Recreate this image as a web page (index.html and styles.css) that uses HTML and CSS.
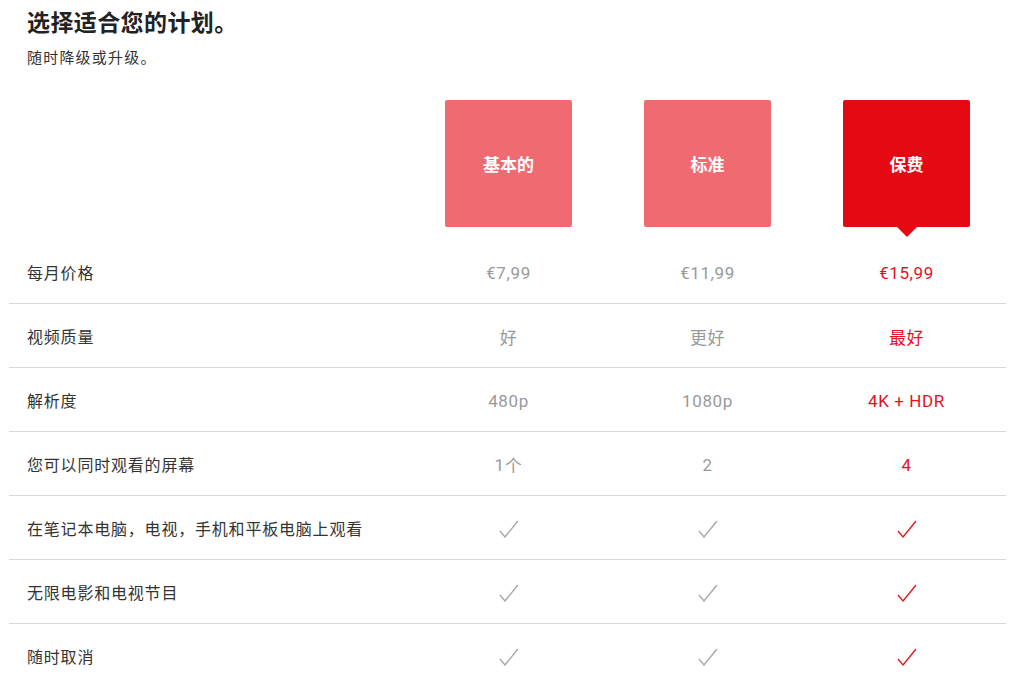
FILE: index.html
```html
<!DOCTYPE html>
<html lang="zh-CN">
<head>
<meta charset="utf-8">
<title>选择适合您的计划</title>
<link rel="stylesheet" href="styles.css">
</head>
<body>
<div class="page">
  <h1 class="title">选择适合您的计划。</h1>
  <p class="subtitle">随时降级或升级。</p>

  <div class="plans">
    <div class="spacer"></div>
    <div class="plan-cell"><div class="plan">基本的</div></div>
    <div class="plan-cell"><div class="plan">标准</div></div>
    <div class="plan-cell"><div class="plan selected">保费</div></div>
  </div>

  <div class="table">
    <div class="row">
      <div class="label">每月价格</div>
      <div class="val">€7,99</div>
      <div class="val">€11,99</div>
      <div class="val on">€15,99</div>
    </div>
    <div class="row">
      <div class="label">视频质量</div>
      <div class="val cjk">好</div>
      <div class="val cjk">更好</div>
      <div class="val cjk on">最好</div>
    </div>
    <div class="row">
      <div class="label">解析度</div>
      <div class="val">480p</div>
      <div class="val">1080p</div>
      <div class="val on">4K + HDR</div>
    </div>
    <div class="row">
      <div class="label">您可以同时观看的屏幕</div>
      <div class="val">1<span class="cjk">个</span></div>
      <div class="val">2</div>
      <div class="val on">4</div>
    </div>
    <div class="row">
      <div class="label">在笔记本电脑，电视，手机和平板电脑上观看</div>
      <div class="val"><svg class="check" viewBox="0 0 20 18"><polyline points="1,11 6,17 19,1"/></svg></div>
      <div class="val"><svg class="check" viewBox="0 0 20 18"><polyline points="1,11 6,17 19,1"/></svg></div>
      <div class="val on"><svg class="check" viewBox="0 0 20 18"><polyline points="1,11 6,17 19,1"/></svg></div>
    </div>
    <div class="row">
      <div class="label">无限电影和电视节目</div>
      <div class="val"><svg class="check" viewBox="0 0 20 18"><polyline points="1,11 6,17 19,1"/></svg></div>
      <div class="val"><svg class="check" viewBox="0 0 20 18"><polyline points="1,11 6,17 19,1"/></svg></div>
      <div class="val on"><svg class="check" viewBox="0 0 20 18"><polyline points="1,11 6,17 19,1"/></svg></div>
    </div>
    <div class="row last">
      <div class="label">随时取消</div>
      <div class="val"><svg class="check" viewBox="0 0 20 18"><polyline points="1,11 6,17 19,1"/></svg></div>
      <div class="val"><svg class="check" viewBox="0 0 20 18"><polyline points="1,11 6,17 19,1"/></svg></div>
      <div class="val on"><svg class="check" viewBox="0 0 20 18"><polyline points="1,11 6,17 19,1"/></svg></div>
    </div>
  </div>
</div>
</body>
</html>
```

FILE: styles.css
```css
* { box-sizing: border-box; }

html, body {
  margin: 0;
  padding: 0;
  background: #ffffff;
}

body {
  font-family: "Noto Sans CJK SC", "Noto Sans", sans-serif;
  color: #333333;
}

.page {
  width: 997px;
  margin-left: 9px;
  padding-top: 7px;
}

.title {
  margin: 0;
  padding-left: 18px;
  font-size: 23px;
  line-height: 28px;
  font-weight: 700;
  color: #222222;
  letter-spacing: 0.4px;
}

.subtitle {
  margin: 12px 0 0;
  padding-left: 18px;
  font-size: 15px;
  line-height: 20px;
  color: #333333;
  letter-spacing: 1.2px;
}

.plans {
  display: grid;
  grid-template-columns: 400px repeat(3, 199px);
  margin-top: 33px;
  height: 140px;
}

.plan-cell {
  display: flex;
  justify-content: center;
}

.plan {
  position: relative;
  width: 127px;
  height: 127px;
  border-radius: 2px;
  background: #e50914;
  opacity: 0.6;
  color: #ffffff;
  font-size: 17px;
  font-weight: 700;
  display: flex;
  align-items: center;
  justify-content: center;
}

.plan.selected {
  opacity: 1;
}

.plan.selected::after {
  content: "";
  position: absolute;
  left: 50%;
  top: 100%;
  margin-left: -10px;
  border-left: 10px solid transparent;
  border-right: 10px solid transparent;
  border-top: 10px solid #e50914;
}

.row {
  display: grid;
  grid-template-columns: 400px repeat(3, 199px);
  height: 64px;
  border-bottom: 1px solid #d9d9d9;
  align-items: center;
}

.row.last {
  border-bottom: none;
}

.label {
  padding-left: 18px;
  font-size: 16px;
  letter-spacing: 0.8px;
  color: #333333;
}

.val {
  text-align: center;
  font-family: "Roboto", "Noto Sans CJK SC", sans-serif;
  font-size: 17px;
  letter-spacing: 0.6px;
  color: #999999;
  display: flex;
  justify-content: center;
  align-items: center;
  padding-top: 2px;
}

.val.cjk, .val .cjk {
  font-family: "Noto Sans CJK SC", sans-serif;
}

.val.on {
  color: #e8101c;
}

.check {
  width: 20px;
  height: 18px;
  display: block;
}

.check polyline {
  fill: none;
  stroke: #a6a6a6;
  stroke-width: 1.3;
}

.val.on .check polyline {
  stroke: #e8101c;
}
```
